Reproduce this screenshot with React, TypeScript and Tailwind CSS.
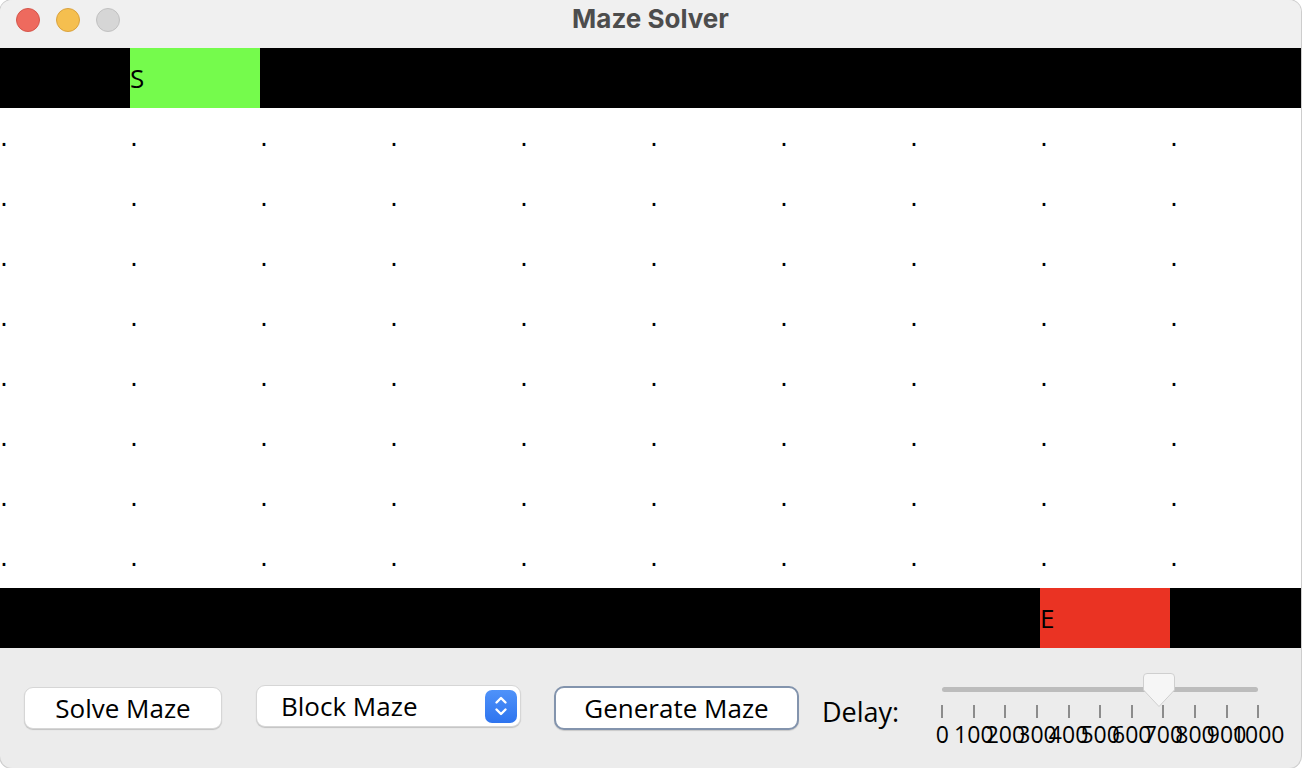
import React from "react";

const COLS = 10;
const ROWS = 10;

type Cell = { bg: string; text: string };

function cellAt(r: number, c: number): Cell {
  if (r === 0) return c === 1 ? { bg: "bg-[#75fb4c]", text: "S" } : { bg: "bg-black", text: "" };
  if (r === ROWS - 1) return c === 8 ? { bg: "bg-[#ea3323]", text: "E" } : { bg: "bg-black", text: "" };
  return { bg: "bg-white", text: "." };
}

function TrafficLights() {
  return (
    <div className="flex items-start gap-[16px] pl-[16px] pt-[8px]">
      <div className="w-[24px] h-[24px] rounded-full bg-[#ee6a5e] border border-[#d4564b]" />
      <div className="w-[24px] h-[24px] rounded-full bg-[#f5bf4f] border border-[#d9a23f]" />
      <div className="w-[24px] h-[24px] rounded-full bg-[#d6d6d6] border border-[#c0c0c0]" />
    </div>
  );
}

function Stepper() {
  return (
    <div className="w-[32px] h-[33px] rounded-[7px] bg-gradient-to-b from-[#4f92f9] to-[#2e74ef] flex items-center justify-center">
      <svg width="16" height="24" viewBox="0 0 16 24" fill="none" stroke="white" strokeWidth="2.4" strokeLinecap="round" strokeLinejoin="round">
        <path d="M3.5 8.5 L8 4 L12.5 8.5" />
        <path d="M3.5 15.5 L8 20 L12.5 15.5" />
      </svg>
    </div>
  );
}

function Slider() {
  const labels = ["0", "100", "200", "300", "400", "500", "600", "700", "800", "900", "1000"];
  return (
    <div className="relative w-[316px] mt-[39px]">
      <div className="h-[5px] rounded-full bg-[#bcbcbc]" />
      {/* thumb */}
      <div className="absolute left-[201px] top-[-14px]">
        <svg width="32" height="35" viewBox="0 0 32 35">
          <path
            d="M4 0.5 H28 Q31.5 0.5 31.5 4 V17 L16 33.5 L0.5 17 V4 Q0.5 0.5 4 0.5 Z"
            fill="#f6f6f6"
            stroke="#cfcfcf"
            strokeWidth="1"
          />
        </svg>
      </div>
      <div className="flex justify-between mt-[13px]">
        {labels.map((l) => (
          <div key={l} className="w-0 flex flex-col items-center">
            <div className="w-[2px] h-[13px] bg-[#8c8c8c] shrink-0" />
            <span className="mt-[5px] text-[23px] leading-none text-black whitespace-nowrap">{l}</span>
          </div>
        ))}
      </div>
    </div>
  );
}

export default function App() {
  const cells: React.ReactNode[] = [];
  for (let r = 0; r < ROWS; r++) {
    for (let c = 0; c < COLS; c++) {
      const cell = cellAt(r, c);
      cells.push(
        <div key={`${r}-${c}`} className={`h-[60px] ${cell.bg} pt-[17px]`}>
          <span className="block text-[26px] leading-none text-black" style={cell.text === "." ? { fontFamily: '"DejaVu Sans", sans-serif', fontSize: 25 } : undefined}>
            {cell.text}
          </span>
        </div>
      );
    }
  }

  return (
    <div className="w-[1302px] h-[768px] bg-white" style={{ fontFamily: '"Open Sans", "DejaVu Sans", sans-serif' }}>
      <div className="w-[1301px] h-[768px] rounded-[12px] overflow-hidden flex flex-col bg-[#ececec] shadow-[0_0_0_1px_#cdcdcd]">
        {/* title bar */}
        <div className="h-[48px] bg-[#f0f0f0] grid grid-cols-[1fr_auto_1fr] shrink-0">
          <TrafficLights />
          <div
            className="pt-[4px] text-[26px] leading-[30px] font-bold text-[#4d4d4d]"
            style={{ fontFamily: 'Inter, "Liberation Sans", sans-serif' }}
          >
            Maze Solver
          </div>
          <div />
        </div>

        {/* maze */}
        <div className="grid grid-cols-[repeat(9,130px)_1fr] shrink-0">{cells}</div>

        {/* controls */}
        <div className="flex-1 flex items-start pl-[24px]">
          <button className="mt-[39px] w-[198px] h-[42px] rounded-[9px] bg-white border border-[#d6d6d6] shadow-[0_1px_1px_rgba(0,0,0,0.18)] text-[26px] leading-none text-black flex items-center justify-center">
            Solve Maze
          </button>
          <div className="ml-[34px] mt-[37px] w-[265px] h-[42px] rounded-[9px] bg-white border border-[#d6d6d6] shadow-[0_1px_1px_rgba(0,0,0,0.18)] flex items-center justify-between pl-[24px] pr-[3px]">
            <span className="text-[26px] leading-none text-black">Block Maze</span>
            <Stepper />
          </div>
          <button className="ml-[33px] mt-[38px] w-[245px] h-[44px] rounded-[10px] bg-white border-2 border-[#8394ad] shadow-[0_1px_1px_rgba(0,0,0,0.15)] text-[26px] leading-none text-black flex items-center justify-center">
            Generate Maze
          </button>
          <span className="ml-[23px] mt-[50px] text-[27px] leading-none text-black">Delay:</span>
          <div className="ml-[43px]">
            <Slider />
          </div>
        </div>
      </div>
    </div>
  );
}
